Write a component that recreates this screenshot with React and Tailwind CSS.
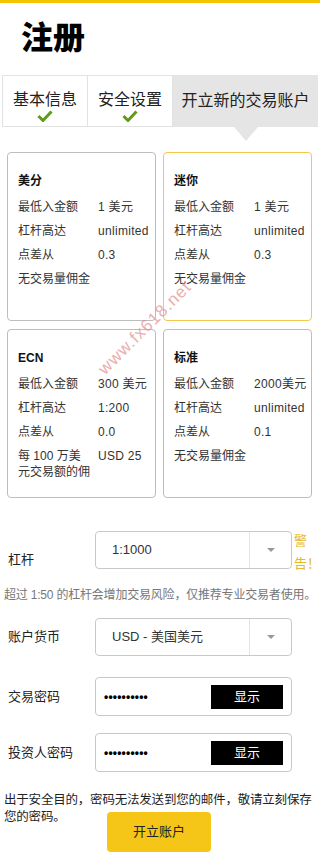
import React from 'react';

const font = { fontFamily: '"Liberation Sans", "Noto Sans CJK SC", sans-serif' };

const plans = [
  {
    name: '美分',
    rows: [
      ['最低入金额', '1 美元'],
      ['杠杆高达', 'unlimited'],
      ['点差从', '0.3'],
      ['无交易量佣金', ''],
    ],
  },
  {
    name: '迷你',
    active: true,
    rows: [
      ['最低入金额', '1 美元'],
      ['杠杆高达', 'unlimited'],
      ['点差从', '0.3'],
      ['无交易量佣金', ''],
    ],
  },
  {
    name: 'ECN',
    rows: [
      ['最低入金额', '300 美元'],
      ['杠杆高达', '1:200'],
      ['点差从', '0.0'],
      [
        <>
          每 100 万美
          <br />
          元交易额的佣
        </>,
        'USD 25',
      ],
    ],
  },
  {
    name: '标准',
    rows: [
      ['最低入金额', '2000美元'],
      ['杠杆高达', 'unlimited'],
      ['点差从', '0.1'],
      ['无交易量佣金', ''],
    ],
  },
];

const Check = () => (
  <svg width="16" height="12" viewBox="0 0 16 12" className="mx-auto">
    <path d="M1.5 6 L6 10.5 L14.5 1.5" fill="none" stroke="#5f9a1c" strokeWidth="3" />
  </svg>
);

const PlanCard = ({ plan }) => (
  <div
    className={`h-[169px] rounded-[4px] border pl-[10px] pt-[16px] text-[12px] text-[#333] ${
      plan.active ? 'border-[#f2c94c]' : 'border-[#bdbdbd]'
    }`}
  >
    <div className="mb-[2px] font-bold leading-[24px] text-[#111]">{plan.name}</div>
    {plan.rows.map((row, i) => (
      <div key={i} className="flex py-[4px] leading-[16px]">
        <div className={row[1] ? 'w-[80px] shrink-0' : 'whitespace-nowrap'}>{row[0]}</div>
        {row[1] && <div className="whitespace-nowrap tracking-[0.3px]">{row[1]}</div>}
      </div>
    ))}
  </div>
);

const SelectBox = ({ value }) => (
  <div className="flex h-[38px] w-[197px] rounded-[4px] border border-[#c8c8c8] text-[13px] text-[#333]">
    <div className="flex flex-1 items-center pl-[16px]">{value}</div>
    <div className="flex w-[42px] items-center justify-center border-l border-[#e3e3e3]">
      <div className="h-0 w-0 border-x-[4px] border-t-[4px] border-x-transparent border-t-[#999]" />
    </div>
  </div>
);

const PasswordBox = () => (
  <div className="flex h-[39px] w-[197px] items-center rounded-[4px] border border-[#c8c8c8] pl-[8px] pr-[8px]">
    <div className="flex-1 text-[12px] font-bold tracking-[0.2px] text-black">••••••••••</div>
    <button className="h-[24px] w-[72px] bg-black text-[13px] text-white">显示</button>
  </div>
);

export default function App() {
  return (
    <div className="relative w-[320px] overflow-hidden bg-white pb-[13px]" style={font}>
      <div className="h-[3px] bg-[#f5c400]" />
      <h1 className="pl-[21px] pt-[15px] text-[32px] font-black leading-[40px] text-black">注册</h1>

      <div className="relative mx-[2px] mt-[17px] flex h-[52px] text-[16px] text-[#222]">
        <div className="flex w-[86px] flex-col items-center justify-center border border-[#e2e2e2] pt-[10px]">
          <div className="leading-[20px]">基本信息</div>
          <Check />
        </div>
        <div className="flex w-[85px] flex-col items-center justify-center border-y border-r border-[#e2e2e2] pt-[10px]">
          <div className="leading-[20px]">安全设置</div>
          <Check />
        </div>
        <div className="relative flex flex-1 items-center justify-center bg-[#e5e5e5]">
          <div className="leading-[20px]">开立新的交易账户</div>
          <div className="absolute left-1/2 top-full h-0 w-0 -translate-x-1/2 border-x-[12px] border-t-[14px] border-x-transparent border-t-[#e5e5e5]" />
        </div>
      </div>

      <div className="mt-[25px] grid grid-cols-[149px_149px] gap-x-[7px] gap-y-[8px] pl-[7px]">
        {plans.map((p) => (
          <PlanCard key={p.name} plan={p} />
        ))}
      </div>

      <div className="mt-[33px] flex pl-[8px]">
        <div className="mt-[19px] w-[87px] text-[13px] leading-[20px] text-[#222]">杠杆</div>
        <SelectBox value="1:1000" />
        <div className="-mt-[2px] ml-[2px] w-[16px] text-[13px] leading-[23px] text-[#e6b821]">警告！</div>
      </div>

      <p className="mt-[10px] whitespace-nowrap pl-[4px] text-[12px] leading-[20px] tracking-[-0.2px] text-[#777]">
        超过 1:50 的杠杆会增加交易风险，仅推荐专业交易者使用。
      </p>

      <div className="mt-[13px] flex items-center pl-[8px]">
        <div className="w-[87px] text-[13px] text-[#222]">账户货币</div>
        <SelectBox value="USD - 美国美元" />
      </div>

      <div className="mt-[21px] flex items-center pl-[8px]">
        <div className="w-[87px] text-[13px] text-[#222]">交易密码</div>
        <PasswordBox />
      </div>

      <div className="mt-[17px] flex items-center pl-[8px]">
        <div className="w-[87px] text-[13px] text-[#222]">投资人密码</div>
        <PasswordBox />
      </div>

      <p className="mt-[20px] whitespace-nowrap pl-[4px] text-[12.5px] leading-[17px] tracking-[-0.2px] text-[#222]">
        出于安全目的，密码无法发送到您的邮件，敬请立刻保存
        <br />
        您的密码。
      </p>

      <button className="-mt-[14px] ml-[107px] block h-[40px] w-[104px] rounded-[4px] bg-[#f5c518] text-[13px] text-[#222]">
        开立账户
      </button>

      <span className="pointer-events-none absolute left-[145px] top-[328px] -translate-x-1/2 -translate-y-1/2 -rotate-45 whitespace-nowrap text-[17px] tracking-[1px] text-[#e58c8c] opacity-70">
        www.fx618.net
      </span>
    </div>
  );
}
